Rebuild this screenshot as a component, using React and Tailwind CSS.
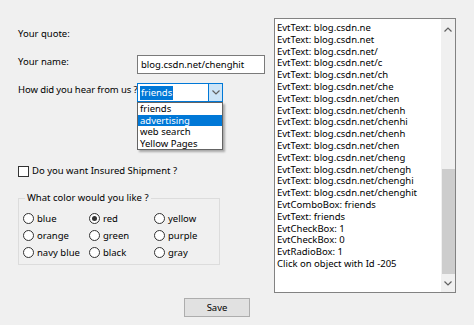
import { useState } from "react";

const logLines = [
  "EvtText: blog.csdn.ne",
  "EvtText: blog.csdn.net",
  "EvtText: blog.csdn.net/",
  "EvtText: blog.csdn.net/c",
  "EvtText: blog.csdn.net/ch",
  "EvtText: blog.csdn.net/che",
  "EvtText: blog.csdn.net/chen",
  "EvtText: blog.csdn.net/chenh",
  "EvtText: blog.csdn.net/chenhi",
  "EvtText: blog.csdn.net/chenh",
  "EvtText: blog.csdn.net/chen",
  "EvtText: blog.csdn.net/cheng",
  "EvtText: blog.csdn.net/chengh",
  "EvtText: blog.csdn.net/chenghi",
  "EvtText: blog.csdn.net/chenghit",
  "EvtComboBox: friends",
  "EvtText: friends",
  "EvtCheckBox: 1",
  "EvtCheckBox: 0",
  "EvtRadioBox: 1",
  "Click on object with Id -205",
];

const colors = [
  "blue", "red", "yellow",
  "orange", "green", "purple",
  "navy blue", "black", "gray",
];

const sources = ["friends", "advertising", "web search", "Yellow Pages"];

function Chevron({ up }) {
  return (
    <svg width="8" height="5" viewBox="0 0 8 5" className="block">
      <path
        d={up ? "M0.5 4.5 L4 1 L7.5 4.5" : "M0.5 0.5 L4 4 L7.5 0.5"}
        fill="none"
        stroke="#606060"
        strokeWidth="1.2"
      />
    </svg>
  );
}

function Radio({ label, checked, onClick }) {
  return (
    <button type="button" onClick={onClick} className="flex h-[17px] items-center gap-[3px] text-left">
      <span className="flex h-[11px] w-[11px] items-center justify-center rounded-full border border-[#333] bg-white">
        {checked ? <span className="h-[5px] w-[5px] rounded-full bg-[#333]" /> : null}
      </span>
      <span>{label}</span>
    </button>
  );
}

export default function App() {
  const [color, setColor] = useState("red");
  const [insured, setInsured] = useState(false);

  return (
    <div className="flex h-[325px] w-[474px] bg-[#f0f0f0] text-[9.5px] leading-[14px] text-black [font-family:'Noto_Sans',sans-serif]">
      <div className="flex w-[274px] shrink-0 flex-col pl-[18px] pt-[27px]">
        <div className="h-[14px]">Your quote:</div>

        <div className="mt-[14px] flex h-[19px] items-start">
          <span className="w-[119px]">Your name:</span>
          <div className="flex h-[19px] w-[128px] items-center border border-[#7a7a7a] bg-white pl-[3px]">
            blog.csdn.net/chenghit
          </div>
        </div>

        <div className="mt-[9px] flex h-[19px] items-start">
          <span className="w-[119px] whitespace-nowrap tracking-[-0.1px]">How did you hear from us ?</span>
          <div className="relative">
            <div className="flex h-[19px] w-[86px] border border-[#0078d7] bg-white">
              <div className="flex flex-1 items-center pl-[2px]">
                <span className="bg-[#0078d7] px-[1px] leading-[14px] text-white">friends</span>
              </div>
              <div className="flex w-[14px] items-center justify-center border-l border-[#0078d7] bg-[#cce4f7]">
                <Chevron />
              </div>
            </div>
            <div className="absolute left-0 top-[19px] z-10 w-[86px] border border-[#646464] bg-white shadow-[2px_2px_2px_rgba(0,0,0,0.3)]">
              {sources.map((s) => (
                <div
                  key={s}
                  className={`h-[11.5px] pl-[2px] leading-[11.5px] ${s === "advertising" ? "bg-[#0078d7] text-white" : ""}`}
                >
                  {s}
                </div>
              ))}
            </div>
          </div>
        </div>

        <button
          type="button"
          onClick={() => setInsured(!insured)}
          className="mt-[62px] flex h-[14px] items-center gap-[3px] text-left"
        >
          <span className="flex h-[11px] w-[11px] items-center justify-center border border-[#333] bg-white text-[9px] leading-none">
            {insured ? "✓" : ""}
          </span>
          <span>Do you want Insured Shipment ?</span>
        </button>

        <fieldset className="mt-[13px] w-[202px] border border-[#dcdcdc] pb-[3px] pl-[4px]">
          <legend className="ml-[2px] h-[14px] px-[2px]">What color would you like ?</legend>
          <div className="mt-[5px] grid grid-cols-[66px_65px_1fr]">
            {colors.map((c) => (
              <Radio key={c} label={c} checked={color === c} onClick={() => setColor(c)} />
            ))}
          </div>
        </fieldset>

        <button
          type="button"
          className="mt-[33px] ml-[166px] h-[19px] w-[66px] border border-[#adadad] bg-[#e1e1e1]"
        >
          Save
        </button>
      </div>

      <div className="mt-[18px] flex h-[275px] w-[182px] border border-[#828282] bg-white">
        <div className="flex-1 overflow-hidden pl-[2px] pt-[3px] leading-[11.8px]">
          {logLines.map((line, i) => (
            <div key={i} className="whitespace-nowrap">{line}</div>
          ))}
        </div>
        <div className="flex w-[14px] flex-col items-center bg-[#f0f0f0]">
          <div className="flex h-[14px] items-center justify-center pt-[6px]">
            <Chevron up />
          </div>
          <div className="mt-[136px] h-[105px] w-[13px] bg-[#cdcdcd]" />
          <div className="flex flex-1 items-center justify-center">
            <Chevron />
          </div>
        </div>
      </div>
    </div>
  );
}
